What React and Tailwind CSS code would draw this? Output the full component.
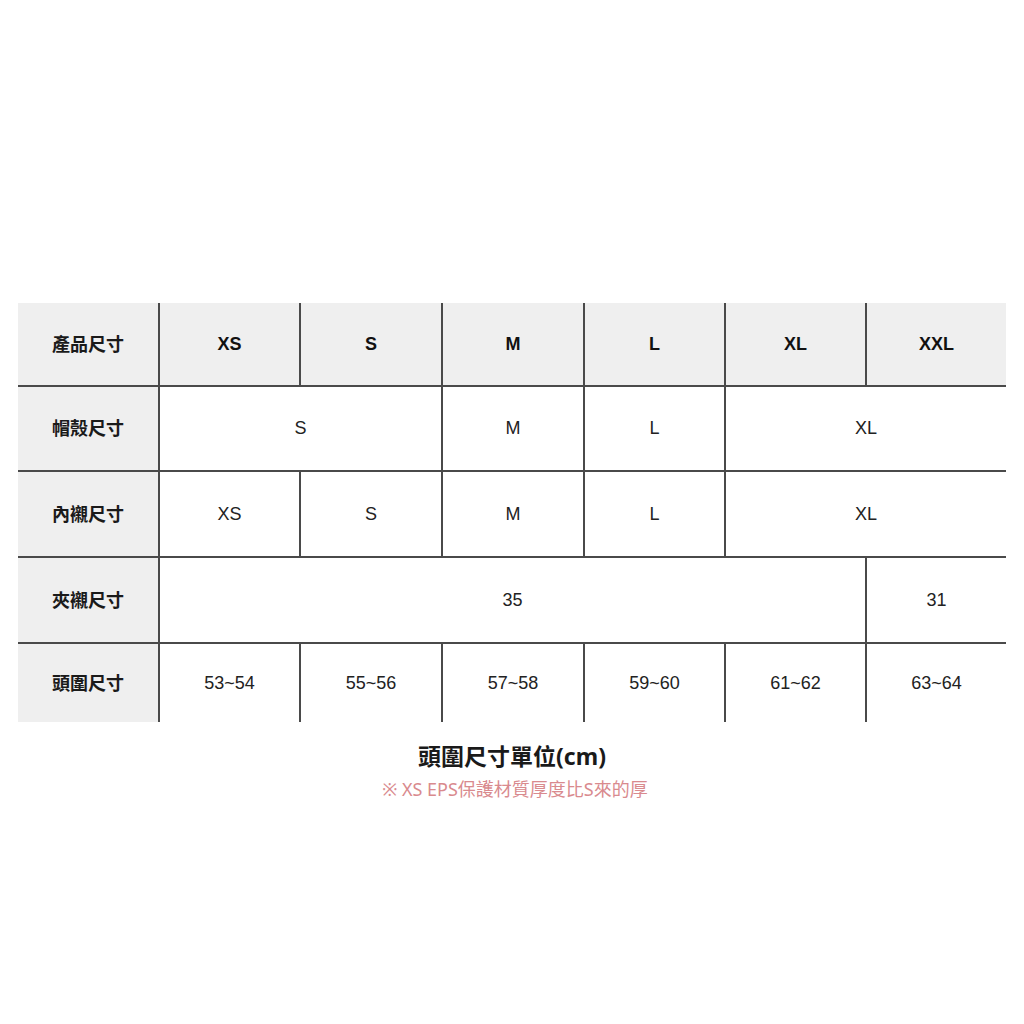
import React from "react";

const latin = { fontFamily: '"Liberation Sans", "Noto Sans CJK TC", sans-serif' };
const cjk = { fontFamily: '"Noto Sans", "Noto Sans CJK TC", sans-serif' };

// each row: label + cells { text, span }
const rows = [
    { label: "產品尺寸", head: true, cells: [["XS", 1], ["S", 1], ["M", 1], ["L", 1], ["XL", 1], ["XXL", 1]] },
    { label: "帽殼尺寸", cells: [["S", 2], ["M", 1], ["L", 1], ["XL", 2]] },
    { label: "內襯尺寸", cells: [["XS", 1], ["S", 1], ["M", 1], ["L", 1], ["XL", 2]] },
    { label: "夾襯尺寸", cells: [["35", 5], ["31", 1]] },
    { label: "頭圍尺寸", cells: [["53~54", 1], ["55~56", 1], ["57~58", 1], ["59~60", 1], ["61~62", 1], ["63~64", 1]] },
];

const spanClass = {
    1: "col-span-1",
    2: "col-span-2",
    5: "col-span-5",
};

const App = () => {
    return (
        <div className="w-[1024px] h-[1024px] bg-white pt-[303px]" style={latin}>
            <div className="ml-[18px] w-[988px] grid grid-cols-[142px_141px_142px_142px_141px_141px_139px] grid-rows-[84px_85px_86px_86px_78px]">
                {rows.map((row, ri) => {
                    const last = ri === rows.length - 1;
                    const bottom = last ? "" : "border-b-2";
                    let col = 1;
                    return (
                        <React.Fragment key={row.label}>
                            <div
                                className={`bg-[#efefef] border-[#4a4a4a] border-r-2 ${bottom} flex items-center justify-center text-[18px] font-bold text-[#1a1a1a]`}
                                style={cjk}
                            >
                                {row.label}
                            </div>
                            {row.cells.map(([text, span], ci) => {
                                col += span;
                                const isLastCol = col === 7;
                                return (
                                    <div
                                        key={ci}
                                        className={`${spanClass[span]} ${row.head ? "bg-[#efefef] font-bold text-[#111]" : "bg-white text-[#222]"} border-[#4a4a4a] ${isLastCol ? "" : "border-r-2"} ${bottom} flex items-center justify-center text-[18px]`}
                                    >
                                        {text}
                                    </div>
                                );
                            })}
                        </React.Fragment>
                    );
                })}
            </div>

            <div className="flex flex-col items-center" style={cjk}>
                <div className="mt-[19px] text-[23px] leading-[31px] font-bold text-[#1a1a1a]">頭圍尺寸單位(cm)</div>
                <div className="mt-[4px] text-[18px] leading-[26px] text-[#d98a8e] ml-[6px]">※ XS EPS保護材質厚度比S來的厚</div>
            </div>
        </div>
    );
};

export default App;
